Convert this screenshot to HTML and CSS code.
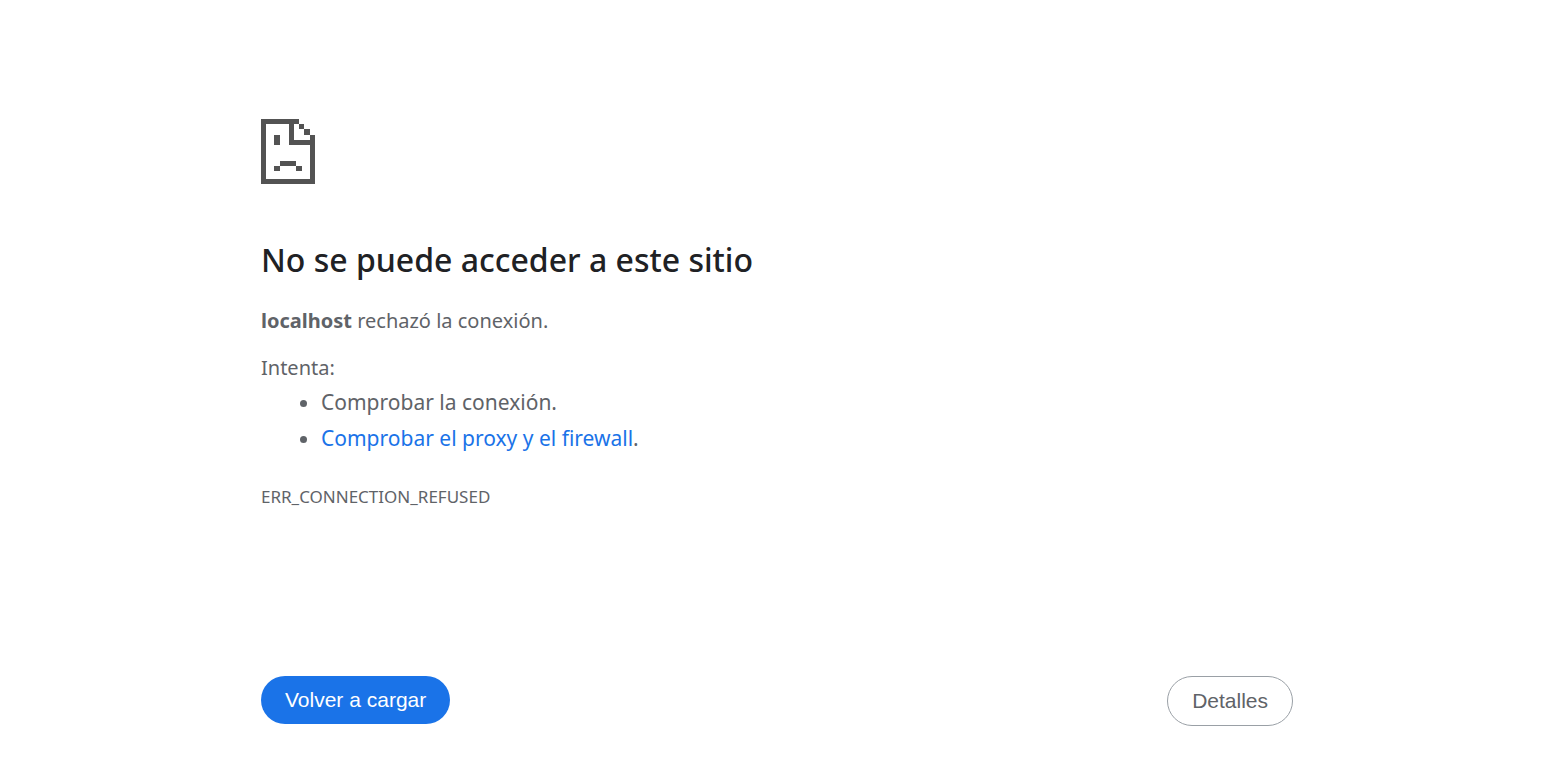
FILE: index.html
```html
<!DOCTYPE html>
<html lang="es">
<head>
<meta charset="utf-8">
<meta name="viewport" content="width=device-width, initial-scale=1">
<title>localhost</title>
<link rel="stylesheet" href="styles.css">
</head>
<body>
<main class="page">
  <svg class="page-icon" viewBox="0 0 54 65" fill="#535353" shape-rendering="crispEdges" aria-hidden="true">
    <path fill-rule="evenodd" d="M0 0H38V5H43V10H49V16H54V65H0ZM5 5V60H49V26H28V5ZM33 5V21H49V16H43V10H38V5Z"/>
    <path d="M13 16h6v10h-6zM19 42h16v5h-16zM13 47h6v5h-6zM35 47h6v5h-6z"/>
  </svg>
  <h1 class="title">No se puede acceder a este sitio</h1>
  <p class="summary"><strong>localhost</strong> rechazó la conexión.</p>
  <p class="hint">Intenta:</p>
  <ul class="suggestions">
    <li>Comprobar la conexión.</li>
    <li><a class="link" href="#proxy">Comprobar el proxy y el firewall</a>.</li>
  </ul>
  <p class="code">ERR_CONNECTION_REFUSED</p>
  <div class="actions">
    <button class="button primary" type="button">Volver a cargar</button>
    <button class="button secondary" type="button">Detalles</button>
  </div>
</main>
</body>
</html>
```
FILE: styles.css
```css
* { box-sizing: border-box; }
body {
  margin: 0;
  background: #fff;
  color: #5f6368;
  font-family: "Segoe UI", "Noto Sans", "Open Sans", sans-serif;
  font-size: 20px;
  line-height: 32px;
}
.page {
  max-width: 1080px;
  margin: 0 auto;
  padding: 119px 24px 32px;
}
.page-icon { display: block; width: 54px; height: 65px; }
.title {
  margin: 52px 0 21px;
  color: #202124;
  font-size: 32px;
  font-weight: 500;
  line-height: 48px;
}
.summary { margin: 0 0 15px; }
.hint { margin: 0; }
.suggestions {
  margin: 0;
  padding-left: 60px;
  font-size: 21px;
  line-height: 36px;
}
.link { color: #1a73e8; text-decoration: none; }
.code { margin: 25px 0 0; font-size: 17px; line-height: 32px; }
.actions {
  display: flex;
  justify-content: space-between;
  align-items: flex-start;
  margin-top: 163px;
}
.button {
  padding: 0 24px;
  border: 0;
  border-radius: 25px;
  font-family: "Liberation Sans", Arial, sans-serif;
  font-size: 21px;
  line-height: 48px;
}
.primary { background: #1a73e8; color: #fff; }
.secondary { border: 1px solid #9aa0a6; background: #fff; color: #5f6368; }
```
